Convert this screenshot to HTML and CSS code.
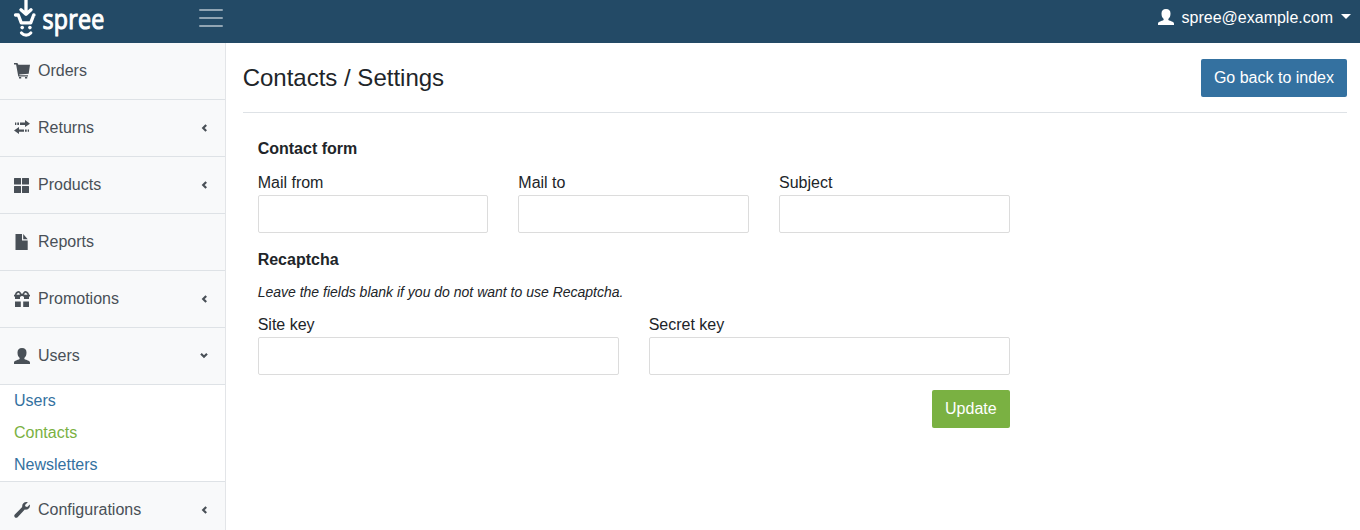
FILE: index.html
```html
<!DOCTYPE html>
<html lang="en">
<head>
<meta charset="utf-8">
<title>Contacts / Settings</title>
<link rel="stylesheet" href="styles.css">
</head>
<body>
<header class="topbar">
  <svg class="logo" width="110" height="43" viewBox="0 0 110 43" role="img" aria-label="spree">
    <g fill="none" stroke="#fff" stroke-linecap="round" stroke-linejoin="round">
      <path stroke-width="3.300" d="M26 0v13M21 9.800l5 4.500 5-4.500"/>
      <path stroke-width="3.300" d="M15.500 15h2.800l3 7.800h9.400l3-7.800H34"/>
      <path stroke-width="3.200" d="M21.500 33c2.600 2.700 6.700 2.700 9.300 0"/>
    </g>
    <circle cx="22.200" cy="27.600" r="1.800" fill="#fff"/><circle cx="29.900" cy="27.600" r="1.800" fill="#fff"/>
    <text class="logo-text" transform="translate(42.500 29) scale(.86 1)" textLength="72" lengthAdjust="spacing">spree</text>
  </svg>
  <div class="burger"><span></span><span></span><span></span></div>
  <div class="account">
    <svg class="icon" viewBox="0 0 16 16"><use href="#user"/></svg>
    <span>spree@example.com</span><i class="caret"></i>
  </div>
</header>
<svg class="defs" width="0" height="0">
  <symbol id="user" viewBox="0 0 16 16"><path d="M8 0C5 0 3.500 1.600 3.500 4.500c0 2.500.7 4.200 2 5.300.4.800.2 1.300-.7 1.700C2.500 12.400 0 12.700 0 14.800V16h16v-1.200c0-2.100-2.500-2.400-4.800-3.300-.9-.4-1.100-.9-.7-1.700 1.300-1.100 2-2.800 2-5.300C12.500 1.600 11 0 8 0z"/></symbol>
  <symbol id="chev" viewBox="0 0 8 8"><path d="M6.200 1 3.200 4l3 3" fill="none" stroke="currentColor" stroke-width="2.200"/></symbol>
</svg>
<div class="layout">
  <nav class="sidebar">
    <a class="item"><svg class="icon" viewBox="0 0 16 16"><path d="M0 0h3.400l1 1.800H16l-1.300 9-9.500.7.200.8H14v1.300H4.300L2.100 1.400H0zM5 14h2.200v1.500H5zM11 14h2.200v1.500H11z"/></svg>Orders</a>
    <a class="item"><svg class="icon" viewBox="0 0 16 16"><path d="M11 0l5 3.700L11 7V4.900H6V2.500h5zM1 2.500h1.300v2.400H1zM3.300 2.500h1.700v2.400H3.300zM5 7v2.400h5v2.400H5V14l-5-3.500zM11 9.400h1.700v2.400H11zM13.700 9.400H15v2.400h-1.300z"/></svg>Returns<svg class="chev"><use href="#chev"/></svg></a>
    <a class="item"><svg class="icon" viewBox="0 -1 16 16"><path d="M.5 0H6.500a.5.500 0 0 1 .5.500V6a.5.500 0 0 1-.5.500H.500A.5.500 0 0 1 0 6V.500A.5.500 0 0 1 .5 0zM8.500 0h6a.5.500 0 0 1 .5.500V6a.5.500 0 0 1-.5.500h-6A.5.500 0 0 1 8 6V.500a.5.500 0 0 1 .5-.5zM.5 8h6a.5.500 0 0 1 .5.500v6a.5.500 0 0 1-.5.500h-6a.5.500 0 0 1-.5-.5v-6A.5.500 0 0 1 .5 8zM8.500 8h6a.5.500 0 0 1 .5.500v6a.5.500 0 0 1-.5.500h-6a.5.500 0 0 1-.5-.5v-6a.5.500 0 0 1 .5-.5z"/></svg>Products<svg class="chev"><use href="#chev"/></svg></a>
    <a class="item"><svg class="icon" viewBox="0 0 16 16"><path d="M1.500 0H8v6.500h5.700V16H1.500zM9.200 0l4.500 5.200H9.200z"/></svg>Reports</a>
    <a class="item"><svg class="icon" viewBox="0 0 16 16"><path d="M0 3.800h5l3-1 3 1h5v1.700h-1V8h-5V6L8 4.500 6 6v2H1V5.500H0zM1 10.500h5.800V16H1zM9.200 10.500H15V16H9.200z"/><path d="M8 4.800 5.700 1.500C4.500 0 2 1.500 1.600 4M8 4.800l2.300-3.300c1.200-1.500 3.700 0 4.100 2.500" fill="none" stroke="currentColor" stroke-width="1.600"/></svg>Promotions<svg class="chev"><use href="#chev"/></svg></a>
    <a class="item"><svg class="icon" viewBox="0 0 16 16"><use href="#user"/></svg>Users<svg class="chev open"><use href="#chev"/></svg></a>
    <div class="submenu"><a>Users</a><a class="active">Contacts</a><a>Newsletters</a></div>
    <a class="item"><svg class="icon" viewBox="0 0 16 16"><path d="M13.800.300 11 2.900l.5 1.600 1.700.4 2.600-2.500c.8 3.300-1.700 5.800-5 5.200L3.600 15.200c-1.800 1.900-4.600-.9-2.800-2.800L8.200 5.100C7.700 1.900 10.600-.700 13.800.300z"/></svg>Configurations<svg class="chev"><use href="#chev"/></svg></a>
  </nav>
  <main class="content">
    <div class="page-head"><h1>Contacts / Settings</h1><button class="btn">Go back to index</button></div>
    <form class="form">
      <h2>Contact form</h2>
      <div class="row thirds">
        <label>Mail from<input type="text"></label>
        <label>Mail to<input type="text"></label>
        <label>Subject<input type="text"></label>
      </div>
      <h2 class="captcha">Recaptcha</h2>
      <p class="hint">Leave the fields blank if you do not want to use Recaptcha.</p>
      <div class="row halves">
        <label>Site key<input type="text"></label>
        <label>Secret key<input type="text"></label>
      </div>
      <div class="actions"><button type="button" class="btn green">Update</button></div>
    </form>
  </main>
</div>
</body>
</html>
```
FILE: styles.css
```css
* { box-sizing: border-box; }
body { margin: 0; height: 530px; overflow: hidden; font: 16px/24px "Liberation Sans", Arial, sans-serif; color: #212529; background: #fff; }
.topbar { height: 43px; background: #234a66; display: flex; color: #fff; }
.logo { flex: none; display: block; }
.logo-text { font: 400 27px "Open Sans", sans-serif; fill: #fff; stroke: #fff; stroke-width: 1.1px; stroke-linejoin: round; }
.burger { margin: 9px 0 0 89px; width: 24px; display: flex; flex-direction: column; gap: 6px; }
.burger span { height: 2px; border-radius: 1px; background: #91a5b3; }
.account { margin-left: auto; padding: 0 9px 8px 0; display: flex; align-items: center; }
.account .icon { margin-right: 7.5px; margin-bottom: 2px; }
.caret { margin-left: 8px; margin-bottom: 3px; border: 5px solid transparent; border-top-color: #fff; border-bottom: 0; }
.icon { width: 16px; height: 16px; flex: none; fill: currentColor; }
.defs { display: block; }
.layout { display: flex; height: 487px; }
.sidebar { width: 226px; flex: none; border-right: 1px solid #e3e5e8; }
.item { display: flex; align-items: center; height: 57px; padding: 0 17px 1px 14px; border-bottom: 1px solid #dee2e6; background: #f8f9fa; color: #495057; }
.item .icon { margin-right: 8px; margin-top: 1px; }
.chev { width: 8px; height: 8px; margin-left: auto; margin-top: 1px; }
.open { transform: rotate(-90deg); }
.submenu { height: 97px; border-bottom: 1px solid #dee2e6; color: #3471a0; }
.submenu a { display: block; height: 32px; line-height: 32px; padding-left: 14px; }
.submenu .active { color: #7ab142; }
.content { flex: 1; padding: 0 13px 0 16.660px; }
.page-head { height: 70px; display: flex; justify-content: space-between; align-items: center; border-bottom: 1px solid #dee2e6; }
h1 { margin: 0; font-size: 24px; font-weight: 400; line-height: 29px; }
.btn { font: inherit; height: 38px; padding: 0 13px; border: 0; border-radius: 2px; background: #3471a0; color: #fff; }
.green { background: #7ab142; }
.form { width: 782px; padding: 24px 15px 0; }
h2 { margin: 0 0 10px; font-size: 16px; line-height: 24px; }
.row { display: grid; column-gap: 30px; }
.thirds { grid-template-columns: repeat(3, 1fr); }
.halves { grid-template-columns: repeat(2, 1fr); }
label { display: block; }
input { display: block; width: 100%; height: 38px; border: 1px solid #dcdcdc; border-radius: 2px; background: #fff; }
.captcha { margin: 15px 0 8px; }
.hint { margin: 0 0 9px; font-size: 14px; line-height: 24px; font-style: italic; }
.actions { display: flex; justify-content: flex-end; margin-top: 15px; }
```
